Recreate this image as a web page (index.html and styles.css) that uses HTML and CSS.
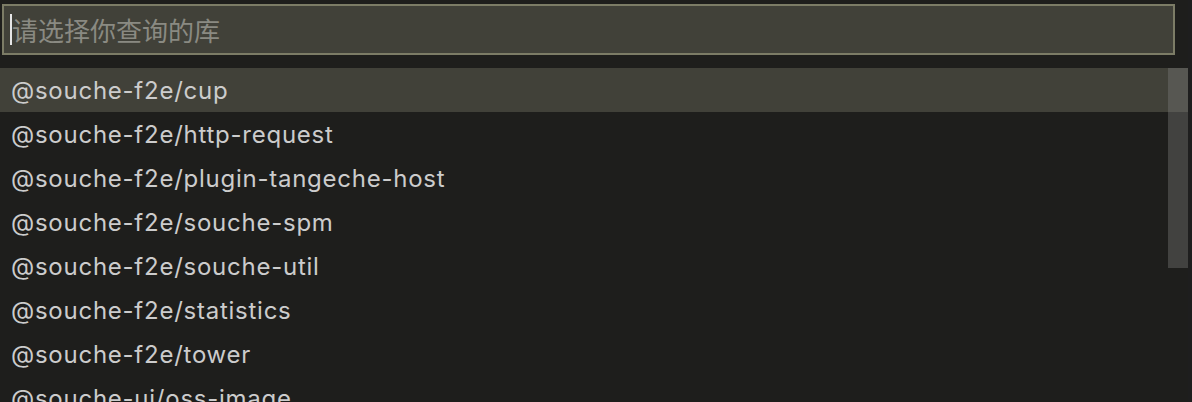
FILE: index.html
```html
<!DOCTYPE html>
<html>
<head>
  <title>Quick Pick</title>
  <link rel="stylesheet" href="styles.css">
</head>
<body>
  <div class="page">
    <div class="picker">
      <div class="search">
        <span class="caret"></span>
        <span class="placeholder">请选择你查询的库</span>
      </div>

      <div class="list">
        <ul class="items">
          <li class="item selected">@souche-f2e/cup</li>
          <li class="item">@souche-f2e/http-request</li>
          <li class="item">@souche-f2e/plugin-tangeche-host</li>
          <li class="item">@souche-f2e/souche-spm</li>
          <li class="item">@souche-f2e/souche-util</li>
          <li class="item">@souche-f2e/statistics</li>
          <li class="item">@souche-f2e/tower</li>
          <li class="item">@souche-ui/oss-image</li>
        </ul>
        <div class="scrollbar">
          <div class="thumb"></div>
        </div>
      </div>
    </div>

    <div class="editor-edge"></div>
  </div>
</body>
</html>
```

FILE: styles.css
```css
/* quick pick styles */

html, body {
  margin: 0;
  padding: 0;
  background-color: #1e1e1c;
  overflow: hidden;
}

body {
  font-family: Inter, "Liberation Sans", "Noto Sans CJK SC", sans-serif;
  color: #cccccc;
}

.page {
  display: flex;
  height: 402px;
}

.picker {
  width: 1188px;
  background-color: #1e1e1c;
}

.search {
  display: flex;
  align-items: center;
  margin: 4px 13px 0 2px;
  height: 47px;
  border: 2px solid #7c7c66;
  background-color: #414139;
  padding-left: 6px;
}

.caret {
  width: 2px;
  height: 31px;
  background-color: #e6e6e6;
}

.placeholder {
  font-family: "Noto Sans CJK SC", sans-serif;
  font-size: 26px;
  color: #8a8a82;
}

.list {
  position: relative;
  margin-top: 13px;
}

.items {
  list-style: none;
  margin: 0;
  padding: 0;
}

.item {
  height: 42px;
  line-height: 42px;
  padding: 2px 0 0 11px;
  font-size: 24px;
  letter-spacing: 0.75px;
  white-space: nowrap;
}

.item.selected {
  background-color: #414139;
}

.scrollbar {
  position: absolute;
  top: 0;
  right: 0;
  width: 20px;
  height: 200px;
}

.thumb {
  height: 200px;
  background-color: rgba(121, 121, 121, 0.4);
}

.editor-edge {
  width: 4px;
  background-color: #1e1e1e;
}
```
